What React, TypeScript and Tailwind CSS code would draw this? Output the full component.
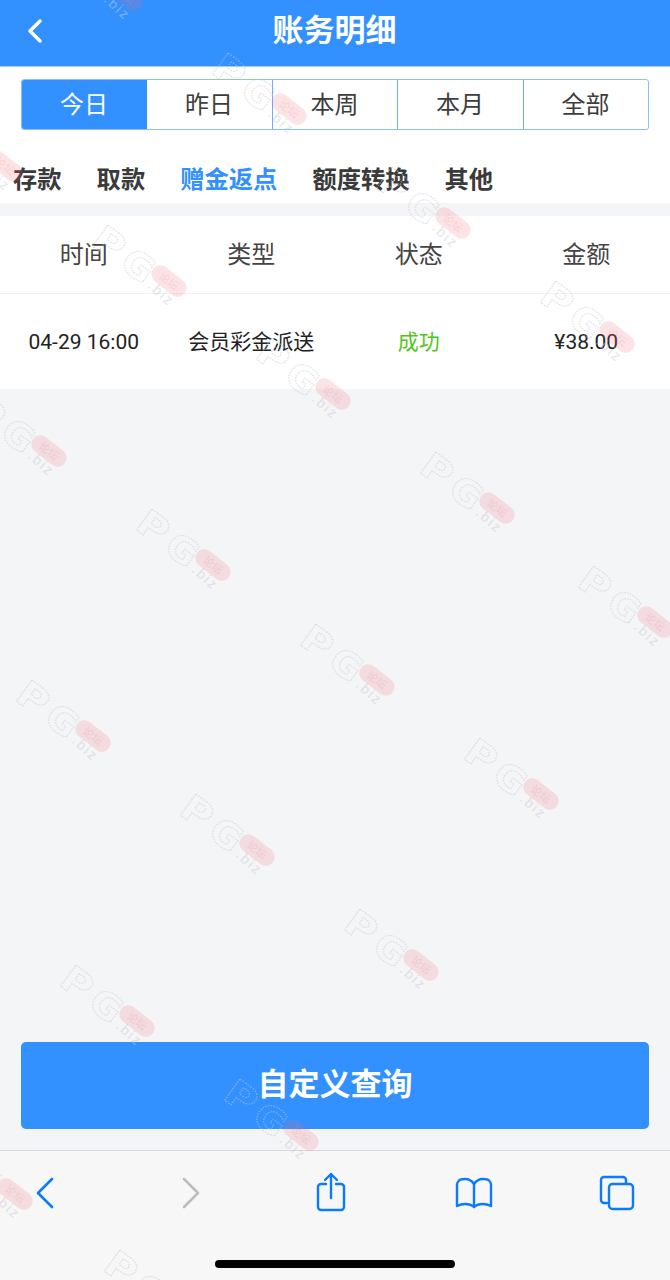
import React from 'react';

const FONT = "font-['Roboto','Noto_Sans_CJK_SC',sans-serif]";

const ranges = ['今日', '昨日', '本周', '本月', '全部'];
const categories = ['存款', '取款', '赠金返点', '额度转换', '其他'];
const columns = ['时间', '类型', '状态', '金额'];

// anchor point of each repeated forum mark
const marks: [number, number][] = [
  [125, -5], [289, 109], [453, 223], [617, 337], [5, 166], [169, 281], [333, 394], [497, 508], [655, 622],
  [49, 451], [213, 565], [377, 680], [541, 794], [93, 736], [257, 850], [421, 965], [137, 1021], [301, 1135],
  [15, 1194], [181, 1306],
];

function ForumMark({ x, y }: { x: number; y: number }) {
  return (
    <svg
      width="150"
      height="110"
      viewBox="0 0 150 110"
      className="absolute"
      style={{ left: x - 110, top: y - 70 }}
    >
      <g
        fill="none"
        stroke="#c6cad3"
        strokeWidth="1.1"
        strokeDasharray="1.6 1.4"
        opacity="0.6"
        fontFamily="DejaVu Sans"
        fontWeight="700"
        fontSize="40"
        textAnchor="middle"
        dominantBaseline="central"
      >
        <text x="0" y="0" transform="translate(50 32) rotate(36) scale(1.05 0.9)">P</text>
        <text x="0" y="0" transform="translate(79 55) rotate(36) scale(0.95 0.9)">G</text>
      </g>
      <text
        x="0"
        y="0"
        transform="translate(88 76) rotate(42)"
        fontFamily="Liberation Sans"
        fontSize="14"
        fill="#c8ccd4"
        opacity="0.5"
        letterSpacing="2"
      >
        .biz
      </text>
      <g transform="rotate(38 110 70)">
        <rect x="90" y="61" width="40" height="18" rx="9" fill="#ee6a74" opacity="0.18" />
        <text x="110" y="74" textAnchor="middle" fontFamily="Noto Sans CJK SC" fontSize="11" fill="#e58f96" opacity="0.22">论坛</text>
      </g>
    </svg>
  );
}

function ToolbarIcon({ children }: { children: React.ReactNode }) {
  return <div className="w-[52px] flex justify-center">{children}</div>;
}

export default function App() {
  return (
    <div className={`relative w-[670px] h-[1280px] overflow-hidden flex flex-col bg-[#f4f5f7] ${FONT}`}>
      {/* title bar */}
      <header className="relative h-[67px] bg-[#3291ff] border-b border-[#a3cdff] flex items-center justify-center shrink-0">
        <svg width="18" height="26" viewBox="0 0 18 26" className="absolute left-[26px] top-[18px]" fill="none" stroke="#fff" strokeWidth="3.4" strokeLinecap="round" strokeLinejoin="round">
          <path d="M14 3 4 13l10 10" />
        </svg>
        <h1 className="text-[31px] font-bold text-white leading-none pb-[5px] pr-[1px]">账务明细</h1>
      </header>

      {/* range + category filters */}
      <section className="bg-white h-[136px] shrink-0 pt-[12px]">
        <div className="mx-[21px] h-[51px] grid grid-cols-[125px_125px_125px_126px_125px] border border-[#8dbfff] rounded-[3px] overflow-hidden">
          {ranges.map((label, i) => (
            <div
              key={label}
              className={`flex items-center justify-center text-[24px] pr-[1px] ${
                i === 0 ? 'bg-[#3291ff] text-white' : 'text-[#3d3d3d]'
              } ${i > 1 ? 'border-l border-[#6aaeff]' : ''}`}
            >
              {label}
            </div>
          ))}
        </div>
        <div className="flex gap-[35px] pl-[13px] mt-[32px]">
          {categories.map((label, i) => (
            <span key={label} className={`text-[24.3px] leading-[36px] font-bold ${i === 2 ? 'text-[#3291ff]' : 'text-[#3a3a3a]'}`}>
              {label}
            </span>
          ))}
        </div>
      </section>

      {/* records */}
      <section className="bg-white mt-[13px] shrink-0">
        <div className="grid grid-cols-4 h-[78px] items-center text-center text-[24px] text-[#444] border-b border-[#f1f1f1]">
          {columns.map(c => (
            <span key={c}>{c}</span>
          ))}
        </div>
        <div className="grid grid-cols-4 h-[95px] pt-[2px] items-center text-center text-[21px] text-[#222]">
          <span>04-29 16:00</span>
          <span>会员彩金派送</span>
          <span className="text-[#52c41a]">成功</span>
          <span>¥38.00</span>
        </div>
      </section>

      <div className="flex-1" />

      <div className="px-[21px] pb-[21px] shrink-0">
        <button className="w-full h-[87px] bg-[#3291ff] rounded-[5px] text-white text-[31px] font-bold leading-none pb-[3px]">自定义查询</button>
      </div>

      {/* browser toolbar */}
      <footer className="h-[130px] bg-[#f7f7f7] border-t border-[#d8d8d8] shrink-0 relative">
        <div className="flex justify-between pl-[19px] pr-[27px] pt-[21px]">
          <ToolbarIcon>
            <svg width="18" height="32" viewBox="0 0 18 32" fill="none" stroke="#0a7aff" strokeWidth="2.6" strokeLinecap="round" strokeLinejoin="round" className="mt-[5px]">
              <path d="M16 2 2 16l14 14" />
            </svg>
          </ToolbarIcon>
          <ToolbarIcon>
            <svg width="18" height="32" viewBox="0 0 18 32" fill="none" stroke="#bdbdbd" strokeWidth="2.6" strokeLinecap="round" strokeLinejoin="round" className="ml-[5px] mt-[5px]">
              <path d="m2 2 14 14L2 30" />
            </svg>
          </ToolbarIcon>
          <ToolbarIcon>
            <svg width="30" height="40" viewBox="0 0 30 40" fill="none" stroke="#0a7aff" strokeWidth="2.4" strokeLinecap="round" strokeLinejoin="round">
              <path d="M10 12H5a3 3 0 0 0-3 3v20a3 3 0 0 0 3 3h20a3 3 0 0 0 3-3V15a3 3 0 0 0-3-3h-5" />
              <path d="M15 26V2M9 8l6-6 6 6" />
            </svg>
          </ToolbarIcon>
          <ToolbarIcon>
            <svg width="38" height="32" viewBox="0 0 38 32" fill="none" stroke="#0a7aff" strokeWidth="2.4" strokeLinecap="round" strokeLinejoin="round" className="mt-[5px]">
              <path d="M19 7c-2-3-5-5-9-5-3 0-5 .5-6 1.500-1 1-2 2-2 4V29c3-1.500 5-2 8-2 4 0 7 1 9 3 2-2 5-3 9-3 3 0 5 .5 8 2V7.500c0-2-1-3-2-4-1-1-3-1.500-6-1.500-4 0-7 2-9 5Z" />
              <path d="M19 7v23" />
            </svg>
          </ToolbarIcon>
          <ToolbarIcon>
            <svg width="36" height="36" viewBox="0 0 36 36" fill="none" stroke="#0a7aff" strokeWidth="2.4" strokeLinecap="round" strokeLinejoin="round" className="mt-[3px]">
              <path d="M27 8V5a3 3 0 0 0-3-3H5a3 3 0 0 0-3 3v20a3 3 0 0 0 3 3h3" />
              <rect x="10" y="9" width="24" height="25" rx="3.500" />
            </svg>
          </ToolbarIcon>
        </div>
        <div className="absolute left-[215px] top-[109px] w-[240px] h-[8px] rounded-full bg-black" />
      </footer>

      {/* repeated forum marks sit over the whole page */}
      <div className="absolute inset-0 pointer-events-none">
        {marks.map(([x, y]) => (
          <ForumMark key={`${x}-${y}`} x={x} y={y} />
        ))}
      </div>
    </div>
  );
}
